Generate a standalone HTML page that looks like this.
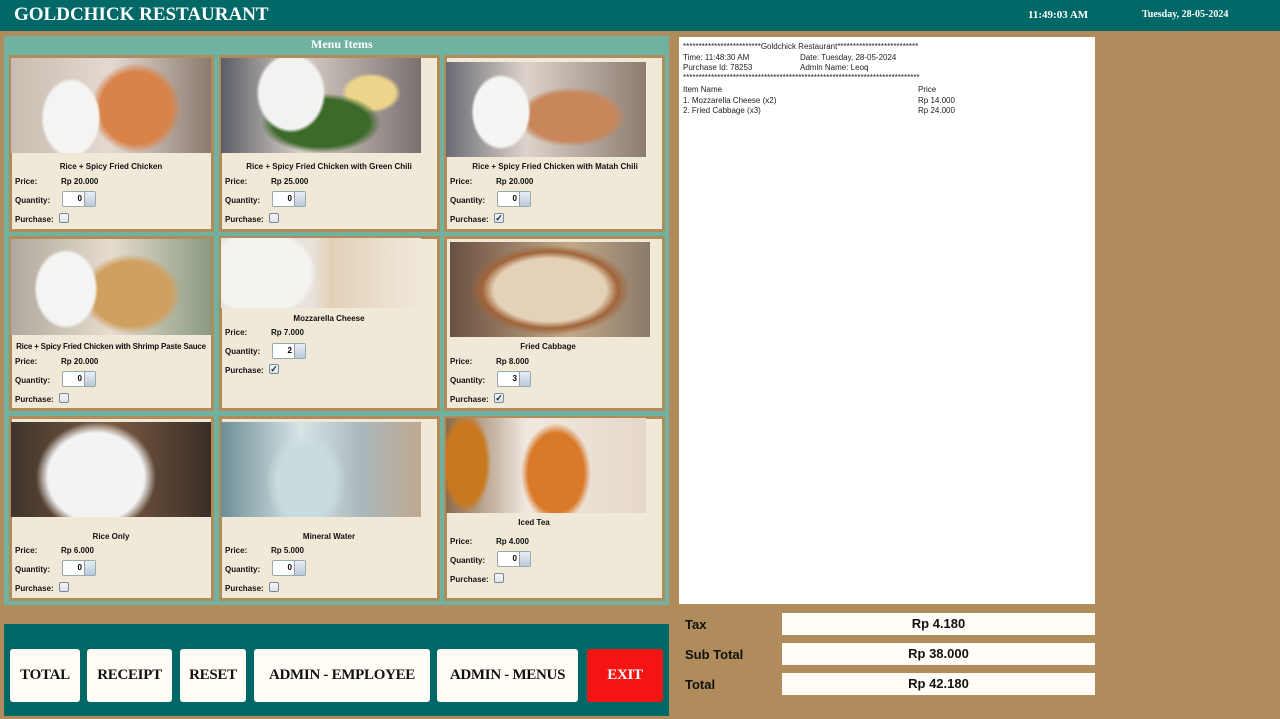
<!DOCTYPE html>
<html><head><meta charset="utf-8"><style>
*{margin:0;padding:0;box-sizing:border-box}
body{width:1280px;height:719px;background:#b08b5b;position:relative;overflow:hidden;font-family:"Liberation Sans",sans-serif}
.a{position:absolute}
.hdr{left:0;top:0;width:1280px;height:31px;background:#006866}
.ser{font-family:"Liberation Serif",serif;font-weight:bold;color:#fff}
.card{position:absolute;background:#f1e9d7;border:3px solid #b08b5b}
.t{position:absolute;font-size:8px;font-weight:bold;color:#111;white-space:nowrap}
.c{transform:translateX(-50%)}
.q{position:absolute;width:34px;height:16px;background:#fff;border:1px solid #9aa;border-radius:2px}
.q span{position:absolute;right:13px;top:2px;font-size:8px;font-weight:bold}
.q i{position:absolute;right:0;top:0;width:11px;height:14px;background:linear-gradient(#e8eef5,#b9c9da);border-left:1px solid #99a}
.cb{position:absolute;width:10px;height:10px;border:1px solid #7a8a9a;border-radius:2px;background:linear-gradient(#f4f6f8,#dde3ea);font-size:9px;line-height:8px;text-align:center;color:#123;font-weight:bold}
.btn{position:absolute;top:649px;height:53px;background:#fffdf5;border-radius:3px;font-family:"Liberation Serif",serif;font-weight:bold;font-size:15px;display:flex;align-items:center;justify-content:center;color:#111;letter-spacing:-0.3px}
.rc{font-size:8px;color:#222;position:absolute;white-space:nowrap}
.lab{position:absolute;left:685px;font-weight:bold;font-size:13px;color:#111}
.box{position:absolute;left:782px;width:313px;height:22px;background:#fffdf5;font-weight:bold;font-size:13px;text-align:center;line-height:22px;color:#111}
</style></head><body>
<div class="a hdr"></div>
<div class="a ser" style="left:14px;top:4px;font-size:19px">GOLDCHICK RESTAURANT</div>
<div class="a ser" style="left:1028px;top:9px;font-size:11px">11:49:03 AM</div>
<div class="a ser" style="left:1142px;top:9px;font-size:10px">Tuesday, 28-05-2024</div>

<div class="a" style="left:4px;top:36px;width:665px;height:569px;background:#6fb2a0"></div>
<div class="a ser" style="left:311px;top:37px;font-size:12px">Menu Items</div>

<div class="card" style="left:9px;top:55px;width:205px;height:177px"></div>
<div class="card" style="left:219px;top:55px;width:221px;height:177px"></div>
<div class="card" style="left:444px;top:55px;width:221px;height:177px"></div>
<div class="card" style="left:9px;top:236px;width:205px;height:175px"></div>
<div class="card" style="left:219px;top:236px;width:221px;height:175px"></div>
<div class="card" style="left:444px;top:236px;width:221px;height:175px"></div>
<div class="card" style="left:9px;top:416px;width:205px;height:185px"></div>
<div class="card" style="left:219px;top:416px;width:221px;height:185px"></div>
<div class="card" style="left:444px;top:416px;width:221px;height:185px"></div>

<div class="a" style="left:11px;top:58px;width:200px;height:95px;background:radial-gradient(ellipse 30px 40px at 60px 60px,#f4f4f2 90%,transparent),radial-gradient(ellipse 45px 45px at 125px 50px,#d9824a 80%,transparent),linear-gradient(90deg,#c9bcb0,#e4dad2 50%,#8a7a70)"></div>
<div class="a" style="left:221px;top:58px;width:200px;height:95px;background:radial-gradient(ellipse 35px 40px at 70px 35px,#f2f2f0 90%,transparent),radial-gradient(ellipse 60px 30px at 100px 65px,#3d6a2a 80%,transparent),radial-gradient(ellipse 30px 20px at 150px 35px,#ecd48a 80%,transparent),linear-gradient(90deg,#5a5e66,#d8cec6 40%,#7a7070)"></div>
<div class="a" style="left:446px;top:62px;width:200px;height:95px;background:radial-gradient(ellipse 30px 38px at 55px 50px,#f5f5f3 90%,transparent),radial-gradient(ellipse 55px 30px at 125px 55px,#c8865a 80%,transparent),linear-gradient(90deg,#6a6c74,#ddd3cb 40%,#8c7c70)"></div>
<div class="a" style="left:11px;top:239px;width:200px;height:96px;background:radial-gradient(ellipse 32px 40px at 55px 50px,#f4f4f2 90%,transparent),radial-gradient(ellipse 50px 40px at 120px 55px,#d0a060 80%,transparent),linear-gradient(90deg,#b0a89c,#e6dcd0 50%,#8a9a80)"></div>
<div class="a" style="left:221px;top:238px;width:200px;height:70px;background:radial-gradient(ellipse 55px 45px at 40px 35px,#f5f3ee 90%,transparent),linear-gradient(90deg,#e8e4dc 45%,#e3d0b8 55%,#f0e8dc)"></div>
<div class="a" style="left:450px;top:242px;width:200px;height:95px;background:radial-gradient(ellipse 80px 45px at 100px 48px,#e4d2b8 70%,#a0643a 85%,transparent),linear-gradient(90deg,#6a5040,#c2a888 60%,#8a7a6a)"></div>
<div class="a" style="left:11px;top:422px;width:200px;height:95px;background:radial-gradient(ellipse 60px 55px at 85px 55px,#f3f3f3 80%,transparent),linear-gradient(90deg,#40342c,#7a5a40 50%,#3a2e28)"></div>
<div class="a" style="left:221px;top:422px;width:200px;height:95px;background:radial-gradient(ellipse 40px 50px at 85px 60px,#c8dce0 70%,transparent),linear-gradient(90deg,#6e8e96,#d8e4e6 40%,#a9b8bc 70%,#c0a890)"></div>
<div class="a" style="left:446px;top:418px;width:200px;height:95px;background:radial-gradient(ellipse 35px 50px at 110px 55px,#d97a2a 80%,transparent),radial-gradient(ellipse 25px 50px at 20px 45px,#c9781e 80%,transparent),linear-gradient(90deg,#8a6a4a,#f0e8e0 40%,#e6d8c8)"></div>

<div class="t c" style="left:111px;top:162px">Rice + Spicy Fried Chicken</div>
<div class="t c" style="left:329px;top:162px">Rice + Spicy Fried Chicken with Green Chili</div>
<div class="t c" style="left:555px;top:162px">Rice + Spicy Fried Chicken with Matah Chili</div>
<div class="t c" style="left:111px;top:342px;letter-spacing:-0.2px">Rice + Spicy Fried Chicken with Shrimp Paste Sauce</div>
<div class="t c" style="left:329px;top:314px">Mozzarella Cheese</div>
<div class="t c" style="left:548px;top:342px">Fried Cabbage</div>
<div class="t c" style="left:111px;top:532px">Rice Only</div>
<div class="t c" style="left:329px;top:532px">Mineral Water</div>
<div class="t c" style="left:534px;top:518px">Iced Tea</div>

<div class="t" style="left:15px;top:177px">Price:</div><div class="t" style="left:61px;top:177px">Rp 20.000</div>
<div class="t" style="left:15px;top:196px">Quantity:</div><div class="q" style="left:62px;top:191px"><span>0</span><i></i></div>
<div class="t" style="left:15px;top:215px">Purchase:</div><div class="cb" style="left:59px;top:213px"></div>
<div class="t" style="left:225px;top:177px">Price:</div><div class="t" style="left:271px;top:177px">Rp 25.000</div>
<div class="t" style="left:225px;top:196px">Quantity:</div><div class="q" style="left:272px;top:191px"><span>0</span><i></i></div>
<div class="t" style="left:225px;top:215px">Purchase:</div><div class="cb" style="left:269px;top:213px"></div>
<div class="t" style="left:450px;top:177px">Price:</div><div class="t" style="left:496px;top:177px">Rp 20.000</div>
<div class="t" style="left:450px;top:196px">Quantity:</div><div class="q" style="left:497px;top:191px"><span>0</span><i></i></div>
<div class="t" style="left:450px;top:215px">Purchase:</div><div class="cb" style="left:494px;top:213px">✓</div>
<div class="t" style="left:15px;top:357px">Price:</div><div class="t" style="left:61px;top:357px">Rp 20.000</div>
<div class="t" style="left:15px;top:376px">Quantity:</div><div class="q" style="left:62px;top:371px"><span>0</span><i></i></div>
<div class="t" style="left:15px;top:395px">Purchase:</div><div class="cb" style="left:59px;top:393px"></div>
<div class="t" style="left:225px;top:328px">Price:</div><div class="t" style="left:271px;top:328px">Rp 7.000</div>
<div class="t" style="left:225px;top:347px">Quantity:</div><div class="q" style="left:272px;top:343px"><span>2</span><i></i></div>
<div class="t" style="left:225px;top:366px">Purchase:</div><div class="cb" style="left:269px;top:364px">✓</div>
<div class="t" style="left:450px;top:357px">Price:</div><div class="t" style="left:496px;top:357px">Rp 8.000</div>
<div class="t" style="left:450px;top:376px">Quantity:</div><div class="q" style="left:497px;top:371px"><span>3</span><i></i></div>
<div class="t" style="left:450px;top:395px">Purchase:</div><div class="cb" style="left:494px;top:393px">✓</div>
<div class="t" style="left:15px;top:546px">Price:</div><div class="t" style="left:61px;top:546px">Rp 6.000</div>
<div class="t" style="left:15px;top:565px">Quantity:</div><div class="q" style="left:62px;top:560px"><span>0</span><i></i></div>
<div class="t" style="left:15px;top:584px">Purchase:</div><div class="cb" style="left:59px;top:582px"></div>
<div class="t" style="left:225px;top:546px">Price:</div><div class="t" style="left:271px;top:546px">Rp 5.000</div>
<div class="t" style="left:225px;top:565px">Quantity:</div><div class="q" style="left:272px;top:560px"><span>0</span><i></i></div>
<div class="t" style="left:225px;top:584px">Purchase:</div><div class="cb" style="left:269px;top:582px"></div>
<div class="t" style="left:450px;top:537px">Price:</div><div class="t" style="left:496px;top:537px">Rp 4.000</div>
<div class="t" style="left:450px;top:556px">Quantity:</div><div class="q" style="left:497px;top:551px"><span>0</span><i></i></div>
<div class="t" style="left:450px;top:575px">Purchase:</div><div class="cb" style="left:494px;top:573px"></div>

<div class="a" style="left:679px;top:37px;width:416px;height:567px;background:#fff"></div>
<div class="rc" style="left:683px;top:42px">*************************Goldchick Restaurant**************************</div>
<div class="rc" style="left:683px;top:53px">Time: 11:48:30 AM</div><div class="rc" style="left:800px;top:53px">Date: Tuesday, 28-05-2024</div>
<div class="rc" style="left:683px;top:63px">Purchase Id: 78253</div><div class="rc" style="left:800px;top:63px">Admin Name: Leoq</div>
<div class="rc" style="left:683px;top:73px">****************************************************************************</div>
<div class="rc" style="left:683px;top:85px">Item Name</div><div class="rc" style="left:918px;top:85px">Price</div>
<div class="rc" style="left:683px;top:96px">1. Mozzarella Cheese (x2)</div><div class="rc" style="left:918px;top:96px">Rp 14.000</div>
<div class="rc" style="left:683px;top:106px">2. Fried Cabbage (x3)</div><div class="rc" style="left:918px;top:106px">Rp 24.000</div>

<div class="a" style="left:4px;top:624px;width:665px;height:92px;background:#006866"></div>
<div class="btn" style="left:10px;width:70px">TOTAL</div>
<div class="btn" style="left:87px;width:85px">RECEIPT</div>
<div class="btn" style="left:180px;width:66px">RESET</div>
<div class="btn" style="left:254px;width:176px">ADMIN - EMPLOYEE</div>
<div class="btn" style="left:437px;width:141px">ADMIN - MENUS</div>
<div class="btn" style="left:587px;width:76px;background:#f51414;color:#fff">EXIT</div>

<div class="lab" style="top:617px">Tax</div><div class="box" style="top:613px">Rp 4.180</div>
<div class="lab" style="top:647px">Sub Total</div><div class="box" style="top:643px">Rp 38.000</div>
<div class="lab" style="top:677px">Total</div><div class="box" style="top:673px">Rp 42.180</div>
</body></html>
